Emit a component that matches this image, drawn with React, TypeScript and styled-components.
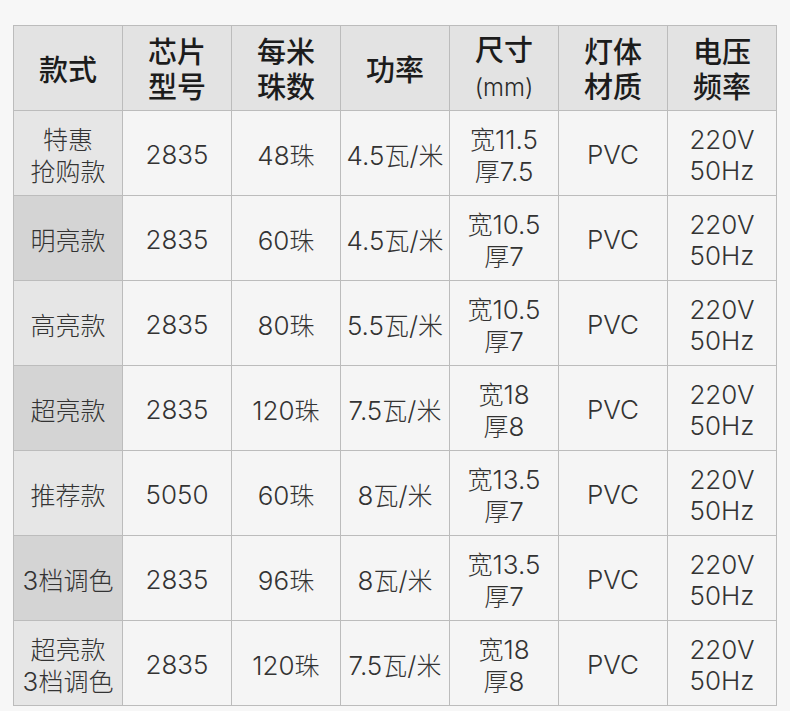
import * as React from "react";
import styled, { createGlobalStyle } from "styled-components";

interface IRow {
  name: string[];
  chip: string;
  beads: string;
  power: string;
  size: string[];
  dark: boolean;
}

const header: string[][] = [
  ["款式"],
  ["芯片", "型号"],
  ["每米", "珠数"],
  ["功率"],
  ["尺寸", "(mm)"],
  ["灯体", "材质"],
  ["电压", "频率"]
];

const rows: IRow[] = [
  { name: ["特惠", "抢购款"], chip: "2835", beads: "48珠", power: "4.5瓦/米", size: ["宽11.5", "厚7.5"], dark: false },
  { name: ["明亮款"], chip: "2835", beads: "60珠", power: "4.5瓦/米", size: ["宽10.5", "厚7"], dark: true },
  { name: ["高亮款"], chip: "2835", beads: "80珠", power: "5.5瓦/米", size: ["宽10.5", "厚7"], dark: false },
  { name: ["超亮款"], chip: "2835", beads: "120珠", power: "7.5瓦/米", size: ["宽18", "厚8"], dark: true },
  { name: ["推荐款"], chip: "5050", beads: "60珠", power: "8瓦/米", size: ["宽13.5", "厚7"], dark: false },
  { name: ["3档调色"], chip: "2835", beads: "96珠", power: "8瓦/米", size: ["宽13.5", "厚7"], dark: true },
  { name: ["超亮款", "3档调色"], chip: "2835", beads: "120珠", power: "7.5瓦/米", size: ["宽18", "厚8"], dark: false }
];

const HAN = /([\u4e00-\u9fff]+)/;

// split latin / han runs so the han glyphs can be a touch smaller
const runs = (text: string) =>
  text
    .split(HAN)
    .filter(Boolean)
    .map((part, i) =>
      /[\u4e00-\u9fff]/.test(part) ? <Han key={i}>{part}</Han> : <React.Fragment key={i}>{part}</React.Fragment>
    );

const lines = (parts: string[]) => (
  <Text>
    {parts.map((p, i) => (
      <React.Fragment key={i}>
        {i > 0 && <br />}
        {runs(p)}
      </React.Fragment>
    ))}
  </Text>
);

const App = () => (
  <Page>
    <GlobalStyle />
    <Table>
      <thead>
        <tr>
          {header.map((h, idx) => (
            <HeadCell key={idx}>
              {h.map((p, i) => (
                <React.Fragment key={i}>
                  {i > 0 && <br />}
                  {p.startsWith("(") ? <Unit>{p}</Unit> : p}
                </React.Fragment>
              ))}
            </HeadCell>
          ))}
        </tr>
      </thead>
      <tbody>
        {rows.map((r, idx) => (
          <tr key={idx}>
            <NameCell dark={r.dark}>{lines(r.name)}</NameCell>
            <Cell>{lines([r.chip])}</Cell>
            <Cell>{lines([r.beads])}</Cell>
            <Cell>{lines([r.power])}</Cell>
            <Cell>{lines(r.size)}</Cell>
            <Cell>{lines(["PVC"])}</Cell>
            <Cell>{lines(["220V", "50Hz"])}</Cell>
          </tr>
        ))}
      </tbody>
    </Table>
  </Page>
);

const GlobalStyle = createGlobalStyle`
  body {
    margin: 0;
    background: #f7f7f7;
    font-family: Inter, "Noto Sans CJK SC", sans-serif;
  }
`;

const Page = styled.div`
  width: 790px;
  height: 711px;
  padding: 25px 0 0 13px;
  box-sizing: border-box;
`;

const Table = styled.table`
  width: 764px;
  border-collapse: collapse;
  table-layout: fixed;
  border: 1px solid #bcbcbc;
`;

const HeadCell = styled.th`
  height: 84px;
  padding: 0;
  background: #e3e3e3;
  border: 1px solid #bcbcbc;
  color: #1c1c1c;
  font-family: "Noto Sans CJK SC", sans-serif;
  font-size: 29px;
  font-weight: 500;
  line-height: 35px;
  text-align: center;
  vertical-align: middle;
`;

const Unit = styled.span`
  font-family: Inter, sans-serif;
  font-size: 24px;
  font-weight: 300;
  color: #2a2a2a;
`;

const Cell = styled.td`
  height: 81px;
  padding: 3px 0 0;
  background: #f5f5f5;
  border: 1px solid #bcbcbc;
  color: #333;
  text-align: center;
  vertical-align: middle;
`;

const NameCell = styled(Cell)<{ dark: boolean }>`
  background: ${props => (props.dark ? "#d4d4d4" : "#e6e6e6")};
`;

const Text = styled.div`
  line-height: 31px;
  font-family: Inter, "Noto Sans CJK SC", sans-serif;
  font-size: 26px;
  font-weight: 300;
  white-space: nowrap;
`;

const Han = styled.span`
  font-family: "Noto Sans CJK SC", sans-serif;
  font-size: 25px;
  font-weight: 300;
`;

export default App;
